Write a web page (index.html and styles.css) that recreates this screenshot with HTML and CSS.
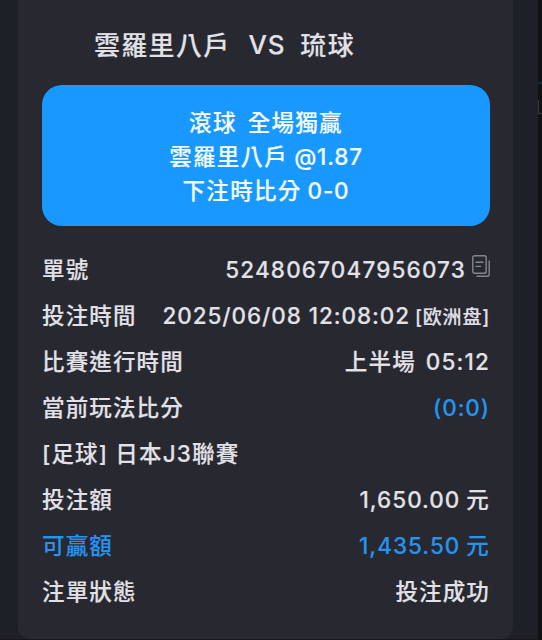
FILE: index.html
```html
<!DOCTYPE html>
<html lang="zh-Hant">
<head>
    <meta charset="UTF-8">
    <meta name="viewport" content="width=device-width, initial-scale=1.0">
    <title>注單</title>
    <link rel="stylesheet" href="styles.css">
</head>
<body>
    <div class="dialog">
        <div class="card">
            <div class="match">
                <span>雲羅里八戶</span>
                <span class="vs">VS</span>
                <span>琉球</span>
            </div>
            <div class="bet">
                <div class="bet-line"><span>滾球</span><span class="wide">全場獨贏</span></div>
                <div class="bet-line"><span>雲羅里八戶</span><span class="odds">@1.87</span></div>
                <div class="bet-line"><span>下注時比分</span><span class="score">0-0</span></div>
            </div>
            <div class="row">
                <span>單號</span>
                <span class="value">
                    <span class="order-number">5248067047956073</span>
                    <svg class="copy" viewBox="0 0 18 22" fill="none" stroke="#85868f" stroke-width="1.4" stroke-linecap="round" stroke-linejoin="round">
                        <rect x="0.8" y="0.8" width="13.4" height="17.4" rx="1.8"/>
                        <path d="M4 7.2h7M4 11.4h4.5M17.2 6v13.3q0 1.9-1.9 1.9H5"/>
                    </svg>
                </span>
            </div>
            <div class="row">
                <span>投注時間</span>
                <span class="value">
                    <span class="time">2025/06/08 12:08:02</span>
                    <span class="market" lang="zh-Hans">[欧洲盘]</span>
                </span>
            </div>
            <div class="row">
                <span>比賽進行時間</span>
                <span class="value"><span>上半場</span><span class="clock">05:12</span></span>
            </div>
            <div class="row">
                <span>當前玩法比分</span>
                <span class="value blue current">(0:0)</span>
            </div>
            <div class="row">
                <span class="league">[足球] 日本J3聯賽</span>
            </div>
            <div class="row">
                <span>投注額</span>
                <span class="value"><span class="amount">1,650.00</span><span>元</span></span>
            </div>
            <div class="row blue">
                <span>可贏額</span>
                <span class="value"><span class="amount">1,435.50</span><span>元</span></span>
            </div>
            <div class="row">
                <span>注單狀態</span>
                <span class="value">投注成功</span>
            </div>
        </div>
    </div>
    <div class="behind">
        <div class="behind-line"></div>
        <div class="behind-tab"></div>
    </div>
</body>
</html>
```
FILE: styles.css
```css
* {
    box-sizing: border-box;
}
body {
    display: flex;
    height: 640px;
    margin: 0;
    overflow: hidden;
    background-color: #101114;
    color: #e1e1e7;
    font-family: Inter, "Noto Sans CJK TC", sans-serif;
    font-size: 22.5px;
    font-weight: 500;
    letter-spacing: 1.15px;
    white-space: nowrap;
    -webkit-text-stroke: 0.15px currentColor;
}
.dialog {
    width: 538px;
    height: 640px;
    padding: 0 25px 1px 18px;
    background-color: #1e2028;
    border-bottom: 1px solid #17171c;
}
.card {
    height: 639px;
    padding: 0 23px 0 24px;
    background-color: #282831;
    border-radius: 0 0 12px 12px;
}
.match {
    display: flex;
    align-items: center;
    height: 85px;
    padding: 2px 0 0 52px;
    font-size: 26px;
    letter-spacing: 1.3px;
}
.vs {
    margin: 0 15px 0 18px;
    padding-top: 2px;
    letter-spacing: 0.8px;
}
.bet {
    height: 141px;
    padding: 19px 0;
    margin-bottom: 19px;
    background-color: #1999ff;
    border-radius: 20px;
    color: #f5fbff;
}
.bet-line {
    display: flex;
    justify-content: center;
    align-items: center;
    height: 34px;
    letter-spacing: 1.3px;
}
.wide {
    margin-left: 11px;
}
.odds,
.score {
    margin-left: 6px;
    letter-spacing: 0.8px;
}
.row {
    display: flex;
    justify-content: space-between;
    align-items: center;
    height: 46px;
}
.value {
    display: flex;
    align-items: center;
}
.odds,
.score,
.order-number,
.time,
.clock,
.current,
.amount {
    padding-top: 2px;
}
.copy {
    width: 18px;
    height: 22px;
    margin: -5px 0 0 6px;
}
.time {
    letter-spacing: 0.92px;
}
.market {
    margin-left: 5px;
    padding-top: 2px;
    font-family: Inter, "Noto Sans CJK SC", sans-serif;
    font-size: 19px;
    letter-spacing: 0.8px;
}
.clock {
    margin-left: 10px;
}
.current {
    letter-spacing: 0.9px;
}
.amount {
    margin-right: 6px;
    letter-spacing: 1px;
}
.blue {
    color: #2494ee;
}
.behind {
    width: 4px;
    padding-top: 82px;
}
.behind-line {
    height: 2px;
    background-color: #10263b;
}
.behind-tab {
    width: 4px;
    height: 14px;
    margin-top: 16px;
    border-left: 1px solid #38393c;
    border-bottom: 1px solid #38393c;
}
```
